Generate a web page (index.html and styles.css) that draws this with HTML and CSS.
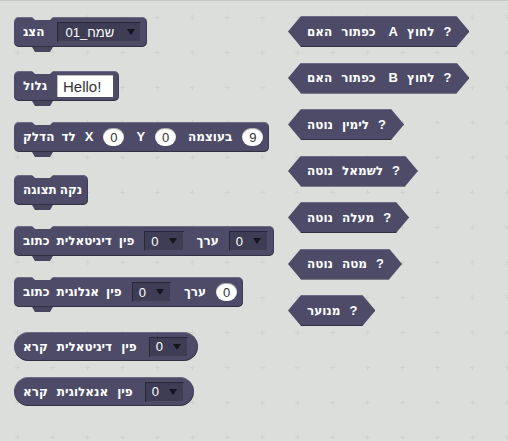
FILE: index.html
```html
<!DOCTYPE html>
<html lang="he">
<head>
<meta charset="utf-8">
<title>Blocks</title>
<link rel="stylesheet" href="styles.css">
</head>
<body>
<div class="palette">
  <div class="col col-left">
    <div class="block cmd">
      <span class="w">הצג</span>
      <span class="dd dd-wide"><span class="dd-text" dir="rtl">שמח_01</span><span class="arrow"></span></span>
    </div>
    <div class="block cmd gap-24">
      <span class="w">גלול</span>
      <span class="textin">Hello!</span>
    </div>
    <div class="block cmd">
      <span class="w">הדלק</span>
      <span class="w">לד</span>
      <span class="w lat sp">X</span>
      <span class="num">0</span>
      <span class="w lat">Y</span>
      <span class="num">0</span>
      <span class="w">בעוצמה</span>
      <span class="num">9</span>
    </div>
    <div class="block cmd tight gap-23">
      <span class="w">תצוגה</span>
      <span class="w">נקה</span>
    </div>
    <div class="block cmd">
      <span class="w">כתוב</span>
      <span class="w">דיגיטאלית</span>
      <span class="w">פין</span>
      <span class="dd"><span class="dd-text">0</span><span class="arrow"></span></span>
      <span class="w">ערך</span>
      <span class="dd"><span class="dd-text">0</span><span class="arrow"></span></span>
    </div>
    <div class="block cmd">
      <span class="w">כתוב</span>
      <span class="w">אנלוגית</span>
      <span class="w">פין</span>
      <span class="dd"><span class="dd-text">0</span><span class="arrow"></span></span>
      <span class="w">ערך</span>
      <span class="num">0</span>
    </div>
    <div class="block rep gap-25">
      <span class="w">קרא</span>
      <span class="w">דיגיטאלית</span>
      <span class="w">פין</span>
      <span class="dd"><span class="dd-text">0</span><span class="arrow"></span></span>
    </div>
    <div class="block rep gap-16">
      <span class="w">קרא</span>
      <span class="w">אנאלוגית</span>
      <span class="w">פין</span>
      <span class="dd"><span class="dd-text">0</span><span class="arrow"></span></span>
    </div>
  </div>
  <div class="col col-right">
    <div class="block bool">
      <span class="w">האם</span><span class="w">כפתור</span><span class="w lat sp">A</span><span class="w">לחוץ</span><span class="w lat">?</span>
    </div>
    <div class="block bool">
      <span class="w">האם</span><span class="w">כפתור</span><span class="w lat sp">B</span><span class="w">לחוץ</span><span class="w lat">?</span>
    </div>
    <div class="block bool">
      <span class="w">נוטה</span><span class="w">לימין</span><span class="w lat">?</span>
    </div>
    <div class="block bool">
      <span class="w">נוטה</span><span class="w">לשמאל</span><span class="w lat">?</span>
    </div>
    <div class="block bool">
      <span class="w">נוטה</span><span class="w">מעלה</span><span class="w lat">?</span>
    </div>
    <div class="block bool">
      <span class="w">נוטה</span><span class="w">מטה</span><span class="w lat">?</span>
    </div>
    <div class="block bool">
      <span class="w">מנוער</span><span class="w lat">?</span>
    </div>
  </div>
</div>
</body>
</html>
```
FILE: styles.css
```css
html, body {
  margin: 0;
  padding: 0;
}
body {
  width: 508px;
  height: 441px;
  overflow: hidden;
  background-color: #dcdedc;
  background-image: url("data:image/svg+xml,%3Csvg xmlns='http://www.w3.org/2000/svg' width='35' height='35'%3E%3Cpath d='M17.5 15v5M15 17.5h5' stroke='%23d0d2d0' stroke-width='1'/%3E%3C/svg%3E");
  border-top: 1px solid #c6c7c6;
  box-sizing: border-box;
  font-family: "DejaVu Sans", "Liberation Sans", sans-serif;
}
.palette {
  display: flex;
  align-items: flex-start;
  padding: 16px 0 0 14px;
}
.col {
  display: flex;
  flex-direction: column;
  align-items: flex-start;
}
.col-left {
  width: 274px;
  gap: 21px;
}
.col-right {
  gap: 15.5px;
  margin-top: -1px;
}
.block {
  position: relative;
  display: flex;
  align-items: center;
  gap: 7px;
  background: #4d4b68;
  color: #fff;
  box-shadow: inset 0 1px 0 rgba(255,255,255,0.18), inset 0 -1px 0 rgba(0,0,0,0.35), inset -1px 0 0 rgba(0,0,0,0.2);
  box-sizing: border-box;
}
.block.tight {
  gap: 3px;
}
.w {
  font-weight: bold;
  font-size: 12px;
  line-height: 14px;
  white-space: nowrap;
}
.w.lat {
  font-family: "Liberation Sans", sans-serif;
  font-size: 13px;
}
.w.sp {
  margin-left: 2px;
}
.bool .w.sp {
  margin-left: 4px;
}
.cmd {
  height: 30px;
  padding: 0 6px 0 9px;
  border-radius: 5px;
}
.cmd::before {
  content: "";
  position: absolute;
  top: 0;
  left: 18px;
  width: 21px;
  height: 3px;
  background: #dcdedc;
  clip-path: polygon(0 0, 100% 0, calc(100% - 3px) 100%, 3px 100%);
}
.cmd::after {
  content: "";
  position: absolute;
  top: 100%;
  left: 18px;
  width: 21px;
  height: 5px;
  background: #48465f;
  clip-path: polygon(0 0, 100% 0, calc(100% - 3px) 100%, 3px 100%);
}
.gap-24 { margin-top: 3px; }
.gap-23 { margin-top: 2px; }
.gap-25 { margin-top: 4px; }
.gap-16 { margin-top: -5px; }
.rep {
  height: 29px;
  padding: 0 10px 0 9px;
  gap: 9px;
  border-radius: 15px;
}
.bool {
  height: 31px;
  padding: 0 18px 0 19px;
  gap: 9px;
  clip-path: polygon(13px 0, calc(100% - 13px) 0, 100% 50%, calc(100% - 13px) 100%, 13px 100%, 0 50%);
}
.dd, .textin {
  margin-left: 3px;
  margin-right: 6px;
}
.num {
  margin-left: 3px;
  margin-right: 5px;
}
.block > :last-child {
  margin-right: 0;
}
.dd {
  display: flex;
  align-items: center;
  gap: 10px;
  height: 20px;
  padding: 0 7px 0 7px;
  background: #3e3d55;
  box-shadow: inset 1px 1px 0 rgba(0,0,0,0.35), inset -1px -1px 0 rgba(255,255,255,0.08);
  box-sizing: border-box;
}
.dd-wide {
  width: 84px;
  margin-left: 6px;
  justify-content: space-between;
  padding: 0 6px 0 8px;
}
.dd-text {
  font-family: "Liberation Sans", sans-serif;
  font-size: 13px;
  color: #fff;
}
.arrow {
  width: 0;
  height: 0;
  border-left: 4.5px solid transparent;
  border-right: 4.5px solid transparent;
  border-top: 6px solid #15151f;
}
.textin {
  display: flex;
  align-items: center;
  height: 22px;
  padding: 0 12px 0 6px;
  background: #fff;
  color: #333;
  font-family: "Liberation Sans", sans-serif;
  font-size: 15px;
  box-shadow: inset 1px 1px 0 rgba(0,0,0,0.25);
  box-sizing: border-box;
}
.num {
  display: flex;
  align-items: center;
  justify-content: center;
  min-width: 21px;
  height: 18px;
  padding: 0 5px;
  border-radius: 9px;
  background: #fff;
  color: #333;
  font-family: "Liberation Sans", sans-serif;
  font-size: 13px;
  box-shadow: inset 0 1px 1px rgba(0,0,0,0.35);
  box-sizing: border-box;
}
```
